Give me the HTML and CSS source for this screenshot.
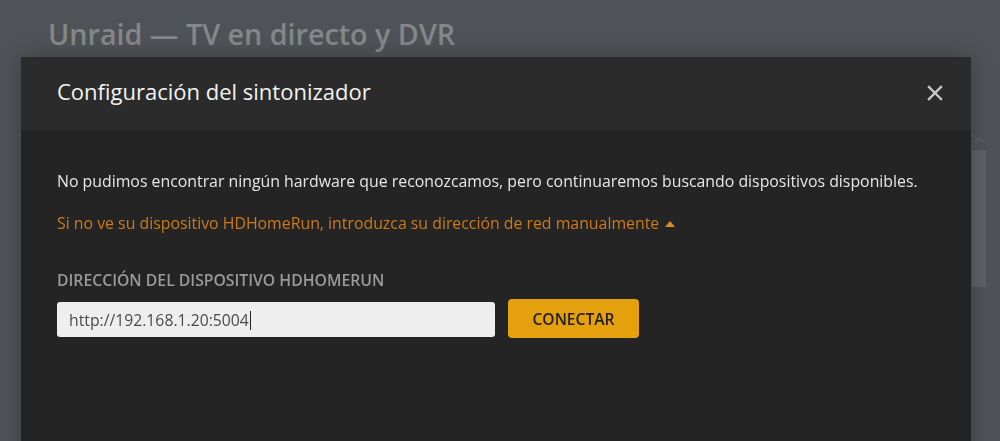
FILE: index.html
```html
<!DOCTYPE html>
<html lang="es">
<head>
<meta charset="UTF-8" />
<meta name="viewport" content="width=device-width, initial-scale=1" />
<title>Unraid — TV en directo y DVR</title>
<link rel="stylesheet" href="styles.css">
</head>
<body>

<!-- Página de fondo -->
<div class="app">
  <h1 class="app-title">Unraid — TV en directo y DVR</h1>
  <div class="app-body">
    <div class="app-content"></div>
    <div class="scrollbar">
      <svg class="scroll-up" width="10" height="6" viewBox="0 0 10 6">
        <path d="M1 5 L5 1 L9 5" fill="none" stroke="currentColor" stroke-width="1.6" />
      </svg>
      <div class="scroll-thumb"></div>
    </div>
  </div>
</div>

<!-- Ventana del sintonizador -->
<div class="modal">
  <div class="modal-header">
    <h2 class="modal-title">Configuración del sintonizador</h2>
    <button class="modal-close" aria-label="Cerrar">
      <svg width="16" height="16" viewBox="0 0 16 16">
        <path d="M2 2 L14 14 M14 2 L2 14" stroke="currentColor" stroke-width="2.4" stroke-linecap="square" />
      </svg>
    </button>
  </div>
  <div class="modal-body">
    <p class="notice">No pudimos encontrar ningún hardware que reconozcamos, pero continuaremos buscando dispositivos disponibles.</p>
    <a class="manual-toggle" href="#">Si no ve su dispositivo HDHomeRun, introduzca su dirección de red manualmente<span class="toggle-caret"></span></a>
    <label class="field-label">Dirección del dispositivo HDHomeRun</label>
    <div class="field-row">
      <div class="text-input"><span class="text-value">http://192.168.1.20:5004</span></div>
      <button class="btn-primary">Conectar</button>
    </div>
  </div>
</div>

</body>
</html>
```

FILE: styles.css
```css
html, body {
  margin: 0;
  padding: 0;
  height: 100%;
  overflow: hidden;
  background-color: #4f5357;
  font-family: "Open Sans", Arial, sans-serif;
}
.app {
  display: flex;
  flex-direction: column;
  height: 100vh;
}
.app-title {
  margin: 0;
  padding: 15px 48px 0;
  font-size: 28.7px;
  font-weight: 600;
  line-height: 38px;
  color: #85878a;
}
.app-body {
  flex: 1;
  display: flex;
}
.app-content {
  flex: 1;
}
.scrollbar {
  width: 14px;
  margin-right: 14px;
  padding-top: 84px;
  display: flex;
  flex-direction: column;
  align-items: center;
  color: #5f6367;
}
.scroll-up {
  display: block;
  margin-bottom: 7px;
}
.scroll-thumb {
  width: 14px;
  height: 137px;
  background: #5d6165;
}

/* Ventana modal */
.modal {
  position: fixed;
  top: 57px;
  left: 21px;
  width: 950px;
  height: 460px;
  background: #242424;
  box-shadow: 0 0 20px rgba(0, 0, 0, 0.25);
}
.modal-header {
  display: flex;
  align-items: flex-start;
  justify-content: space-between;
  height: 73px;
  box-sizing: border-box;
  padding: 19px 28px 0 36px;
  background: #2b2b2b;
}
.modal-title {
  margin: 0;
  font-size: 22px;
  font-weight: 400;
  line-height: 30px;
  color: #f2f2f2;
}
.modal-close {
  display: block;
  padding: 0;
  margin-top: 9px;
  border: none;
  background: none;
  color: #c9c9c9;
  cursor: pointer;
}
.modal-close svg {
  display: block;
}
.modal-body {
  display: flex;
  flex-direction: column;
  align-items: flex-start;
  padding: 41px 36px;
}
.notice {
  margin: 0 0 21px;
  font-size: 15.85px;
  line-height: 21px;
  color: #e6e6e6;
}
.manual-toggle {
  display: flex;
  align-items: center;
  font-size: 15.85px;
  line-height: 21px;
  color: #cc7b19;
  text-decoration: none;
}
.toggle-caret {
  width: 0;
  height: 0;
  margin-left: 6px;
  border-left: 5px solid transparent;
  border-right: 5px solid transparent;
  border-bottom: 6px solid #e08b1c;
}
.field-label {
  margin-top: 36px;
  font-size: 15.75px;
  font-weight: 600;
  line-height: 21px;
  text-transform: uppercase;
  color: #9a9a9a;
}
.field-row {
  display: flex;
  align-items: flex-start;
  gap: 13px;
  margin-top: 8px;
}
.text-input {
  width: 438px;
  height: 35px;
  margin-top: 3px;
  box-sizing: border-box;
  padding: 0 12px;
  display: flex;
  align-items: center;
  background: #eeeeee;
  border-radius: 3px;
  font-size: 15.75px;
  color: #4a4a4a;
}
.text-value::after {
  content: "";
  display: inline-block;
  width: 1px;
  height: 19px;
  margin-left: 1px;
  vertical-align: -4px;
  background: #222;
}
.btn-primary {
  width: 131px;
  height: 39px;
  border: none;
  border-radius: 4px;
  background: #e5a00d;
  font-family: "Open Sans", Arial, sans-serif;
  font-size: 15.6px;
  font-weight: 600;
  text-transform: uppercase;
  color: #1f1f1f;
  cursor: pointer;
}
```
